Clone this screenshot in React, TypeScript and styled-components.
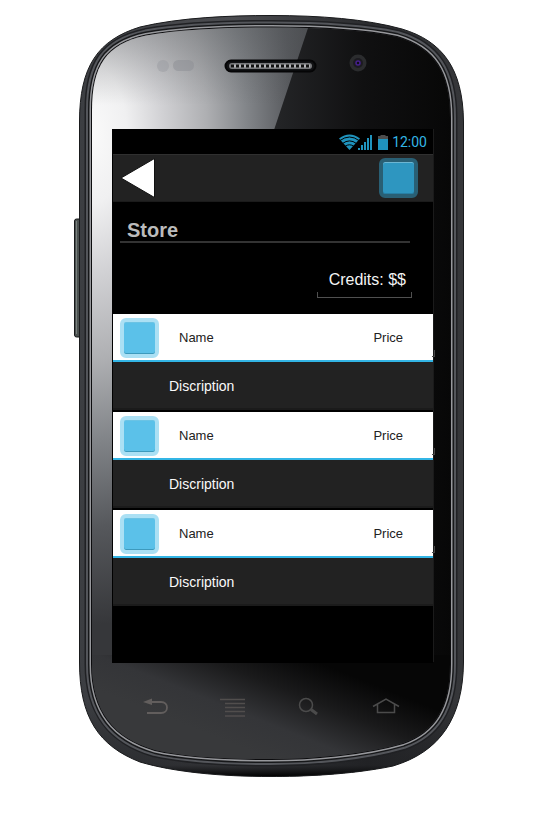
import React from "react";
import styled, { createGlobalStyle } from "styled-components";

const GlobalStyle = createGlobalStyle`
  * { box-sizing: border-box; }
  body { margin: 0; background: #fff; font-family: "Liberation Sans", Arial, sans-serif; }
  button { margin: 0; padding: 0; border: 0; background: none; cursor: pointer; }
  svg { display: block; }
`;

const Page = styled.div`
  display: flex;
  justify-content: center;
  padding: 15px 74px 48px;
`;

const Phone = styled.div`
  position: relative;
  flex: 1;
  max-width: 480px;
  padding: 114px 31px 0 38px;
`;

const Shell = styled.svg`
  position: absolute;
  inset: 0;
  width: 100%;
  height: 100%;
`;

const Screen = styled.main`
  position: relative;
  display: flex;
  flex-direction: column;
  min-height: 534px;
  padding-left: 1px;
  background: #000;
`;

const StatusBar = styled.div`
  display: flex;
  align-items: center;
  justify-content: flex-end;
  height: 25px;
  padding-right: 6px;
  color: #33b5e5;
  font: 14px/24px Roboto, sans-serif;
`;

const StatusIcons = styled.svg`
  margin-right: 3px;
`;

const ActionBar = styled.header`
  display: flex;
  align-items: center;
  justify-content: space-between;
  height: 48px;
  padding: 0 15px 0 7px;
  background: #222;
  border-top: 1px solid #303030;
  border-bottom: 1px solid #1b1b1b;
`;

const Tile = styled.span<{ $dim?: boolean }>`
  display: block;
  width: 39px;
  height: 40px;
  border: 4px solid ${(p) => (p.$dim ? "#295f74" : "#abe0f4")};
  border-radius: 6px;
  background: ${(p) => (p.$dim ? "#2e96c0" : "#5bc1e9")};
  box-shadow: ${(p) =>
    p.$dim
      ? "inset 0 1px 0 #6cb6d3, inset 0 -1px 0 #287fa4"
      : "inset 0 1px 0 #6bc3e4, inset 0 -1px 0 #3d9abd"};
`;

const Title = styled.h1`
  margin: 17px 23px 0 7px;
  padding-left: 7px;
  border-bottom: 2px solid #333;
  color: #bbb;
  font-size: 20px;
  line-height: 22px;
`;

const Credits = styled.p`
  align-self: flex-end;
  margin: 27px 21px 16px 0;
  width: 95px;
  height: 28px;
  padding-right: 6px;
  color: #f4f4f4;
  font-size: 16px;
  line-height: 20px;
  text-align: right;
  background:
    linear-gradient(#505050, #505050) left bottom / 1px 6px no-repeat,
    linear-gradient(#505050, #505050) right bottom / 1px 6px no-repeat,
    linear-gradient(#505050, #505050) left bottom / 100% 1px no-repeat;
`;

const StoreList = styled.ul`
  display: flex;
  flex-direction: column;
  gap: 2px;
  margin: 0;
  padding: 0;
  list-style: none;
`;

const ItemHead = styled.div`
  position: relative;
  display: flex;
  align-items: center;
  height: 48px;
  padding: 2px 30px 0 7px;
  background: #fff;
  border-bottom: 2px solid #33b5e5;
  color: #222;
  font-size: 13px;
  line-height: 16px;

  &::after {
    content: "";
    position: absolute;
    right: -2px;
    bottom: 3px;
    width: 2px;
    height: 6px;
    border-right: 1px solid #484848;
    border-bottom: 1px solid #484848;
  }
`;

const ItemName = styled.span`
  flex: 1;
  margin-left: 20px;
`;

const Description = styled.p`
  height: 48px;
  margin: 0;
  padding-left: 56px;
  background: #222;
  border-bottom: 2px solid #1b1b1b;
  color: #fafafa;
  font-size: 14px;
  line-height: 48px;
`;

const Keys = styled.nav`
  position: relative;
  display: grid;
  grid-template-columns: repeat(4, 1fr);
  justify-items: center;
  height: 114px;
  padding: 31px 9px 0 6px;
`;

const Key = styled.button`
  width: 28px;
  height: 25px;
`;

const OUTER =
  "M79.500 122 C79.500 66 98 40 140 27 C180 17.500 230 15.500 271 15.500 C320 15.500 366 19 402 29 C442 41 463 68 463.500 122 L463.500 662 C463 718 440 752 393 766 C350 775 300 776.500 271 776.500 C220 776.500 174 772 140 762 C99 746 79.500 718 79.500 662 Z";
const GLASS =
  "M92 110 C92 66 106 44 146 35.500 C184 29 230 27.500 271 27.500 C318 27.500 364 30 397 37 C434 48 450 72 450 118 L450 664 C450 708 434 732 403 743 C362 755 310 759 271 759 C226 759 186 757 155 750 C114 738 92 712 92 664 Z";

function PhoneShell() {
  return (
    <Shell viewBox="74 15 390 762" preserveAspectRatio="none" aria-hidden="true">
      <defs>
        <clipPath id="glass"><path d={GLASS} /></clipPath>
        <linearGradient id="rim" x1="0" y1="0" x2="1" y2="0">
          <stop offset="0" stopColor="#3c3e42" />
          <stop offset="0.4" stopColor="#4b4c50" />
          <stop offset="0.75" stopColor="#2b2c2f" />
          <stop offset="1" stopColor="#36373a" />
        </linearGradient>
        <linearGradient id="rimBase" x1="0" y1="0" x2="0" y2="1">
          <stop offset="0.9" stopColor="#08080a" stopOpacity="0" />
          <stop offset="0.985" stopColor="#17181b" stopOpacity="0.5" />
          <stop offset="1" stopColor="#000" />
        </linearGradient>
        <radialGradient id="shine" gradientUnits="userSpaceOnUse" cx="0" cy="0" r="1" gradientTransform="translate(92 135) scale(250 490)">
          <stop offset="0" stopColor="#fafafa" />
          <stop offset="0.14" stopColor="#f0f0f1" />
          <stop offset="0.28" stopColor="#d2d2d5" />
          <stop offset="0.46" stopColor="#aeafb2" />
          <stop offset="0.62" stopColor="#828589" />
          <stop offset="0.8" stopColor="#56585c" />
          <stop offset="1" stopColor="#36373a" />
        </radialGradient>
        <linearGradient id="topShade" gradientUnits="userSpaceOnUse" x1="0" y1="27" x2="0" y2="105">
          <stop offset="0" stopColor="#55585b" stopOpacity="0.4" />
          <stop offset="1" stopColor="#55585b" stopOpacity="0" />
        </linearGradient>
        <linearGradient id="base" gradientUnits="userSpaceOnUse" x1="300" y1="655" x2="260" y2="755">
          <stop offset="0" stopColor="#060606" />
          <stop offset="0.35" stopColor="#1a1a1b" />
          <stop offset="0.7" stopColor="#343538" />
          <stop offset="1" stopColor="#38393b" />
        </linearGradient>
        <linearGradient id="dark" x1="0" y1="0" x2="1" y2="0">
          <stop offset="0" stopColor="#242527" />
          <stop offset="0.5" stopColor="#101011" />
          <stop offset="1" stopColor="#070707" />
        </linearGradient>
      </defs>

      <rect x="74.500" y="219" width="8" height="118" rx="2" fill="#4a504f" stroke="#17191a" />
      <path d="M76.500 221 V334" stroke="#79807e" />
      <path d={OUTER} fill="url(#rim)" />
      <path d={OUTER} fill="url(#rimBase)" stroke="#191a1c" strokeWidth="1" />
      <path d={GLASS} fill="none" stroke="#202124" strokeWidth="15" />
      <path d={GLASS} fill="none" stroke="#54565b" strokeWidth="12" />
      <path d={GLASS} fill="none" stroke="#17181a" strokeWidth="8" />
      <path d={GLASS} fill="none" stroke="#97989c" strokeWidth="5" />
      <path d={GLASS} fill="none" stroke="#0c0c0e" strokeWidth="2" />

      <g clipPath="url(#glass)">
        <rect x="90" y="25" width="362" height="740" fill="url(#shine)" />
        <rect x="90" y="25" width="230" height="80" fill="url(#topShade)" />
        <path d="M309 25 L274 130 V662 H452 V25 Z" fill="url(#dark)" />
        <path d="M90 655 H452 V765 H90 Z" fill="url(#base)" />
      </g>

      <circle cx="163" cy="66" r="6" fill="#9a9ba1" fillOpacity="0.5" />
      <rect x="173" y="60" width="21" height="11" rx="5.500" fill="#8b8d93" fillOpacity="0.5" />

      <rect x="225.500" y="60.500" width="90" height="11" rx="5.500" fill="#111214" stroke="#050506" strokeWidth="2" />
      <rect x="229" y="63" width="83" height="6" rx="3" fill="#77787b" />
      <path d="M231 66 H310" stroke="#b4b4b7" strokeWidth="3" />
      <path d="M231 66 H310" stroke="#111" strokeWidth="3" strokeDasharray="3 2" />
      <circle cx="358" cy="63" r="8.500" fill="#2b2c2e" />
      <circle cx="358" cy="63" r="5" fill="#1c1b20" />
      <circle cx="358" cy="63" r="2" fill="#101014" stroke="#46208c" strokeWidth="1.500" />
      <path d="M433.500 129 V662" stroke="#1b1b1b" />
    </Shell>
  );
}

const items = [
  { id: 1, name: "Name", price: "Price", description: "Discription" },
  { id: 2, name: "Name", price: "Price", description: "Discription" },
  { id: 3, name: "Name", price: "Price", description: "Discription" },
];

export default function App() {
  return (
    <>
      <GlobalStyle />
      <Page>
        <Phone>
          <PhoneShell />
          <Screen>
            <StatusBar>
              <StatusIcons width="50" height="16" viewBox="0 0 50 16" fill="#1f93bd" aria-hidden="true">
                <path d="M0 4.500 Q10.500 -3.500 21 4.500 L10.500 16 Z" />
                <path d="M1 6.500 Q10.500 -0.500 20 6.500 M3.500 9.500 Q10.500 4.300 17.500 9.500 M6 12.500 Q10.500 9 15 12.500" fill="none" stroke="#000" />
                <path d="M19 16 V14 H21 V16 Z M22 16 V11 H24 V16 Z M25 16 V8 H27 V16 Z M28 16 V4 H30 V16 Z M31 16 V1 H33 V16 Z" />
                <path d="M39 4 H49 V16 H39 Z" />
                <path d="M41.500 1 H46.500 V2 H49 V5 H39 V2 H41.500 Z" fill="#4d4d4d" />
              </StatusIcons>
              <span>12:00</span>
            </StatusBar>
            <ActionBar>
              <button type="button" aria-label="Back">
                <svg width="36" height="42" viewBox="0 0 36 42">
                  <path d="M1 21 L34.500 1.500 V40.500 Z" fill="#fff" stroke="#111" />
                </svg>
              </button>
              <button type="button" aria-label="Store options">
                <Tile $dim />
              </button>
            </ActionBar>
            <Title>Store</Title>
            <Credits>Credits: $$</Credits>
            <StoreList>
              {items.map((item) => (
                <li key={item.id}>
                  <ItemHead>
                    <Tile />
                    <ItemName>{item.name}</ItemName>
                    <span>{item.price}</span>
                  </ItemHead>
                  <Description>{item.description}</Description>
                </li>
              ))}
            </StoreList>
          </Screen>
          <Keys aria-label="Phone keys">
            <Key type="button" aria-label="Back key">
              <svg width="28" height="25" viewBox="0 0 28 25" fill="none" stroke="#625e5d" strokeWidth="1.800">
                <path d="M10 8 H19 C27 8 27 19 19 19 H5" />
                <path d="M1 8 L10 4.500 V11 Z" fill="#625e5d" stroke="none" />
              </svg>
            </Key>
            <Key type="button" aria-label="Menu key">
              <svg width="28" height="25" viewBox="0 0 28 25" fill="none" stroke="#514e4d" strokeWidth="1.500">
                <path d="M1 5.500 H26 M6 9.500 H26 M6 13.500 H26 M6 17.500 H26 M6 22 H26" />
              </svg>
            </Key>
            <Key type="button" aria-label="Search key">
              <svg width="28" height="25" viewBox="0 0 28 25" fill="none" stroke="#4b4b4b" strokeWidth="1.500">
                <circle cx="11" cy="11" r="6.500" />
                <path d="M16 15.500 L22 20" strokeWidth="3" />
              </svg>
            </Key>
            <Key type="button" aria-label="Home key">
              <svg width="28" height="25" viewBox="0 0 28 25" fill="none" stroke="#4b4b4b" strokeWidth="1.500">
                <path d="M1 12.500 L14 5 L27 12.500 M5.500 10.500 V18.500 H22.500 V10.500" />
              </svg>
            </Key>
          </Keys>
        </Phone>
      </Page>
    </>
  );
}
